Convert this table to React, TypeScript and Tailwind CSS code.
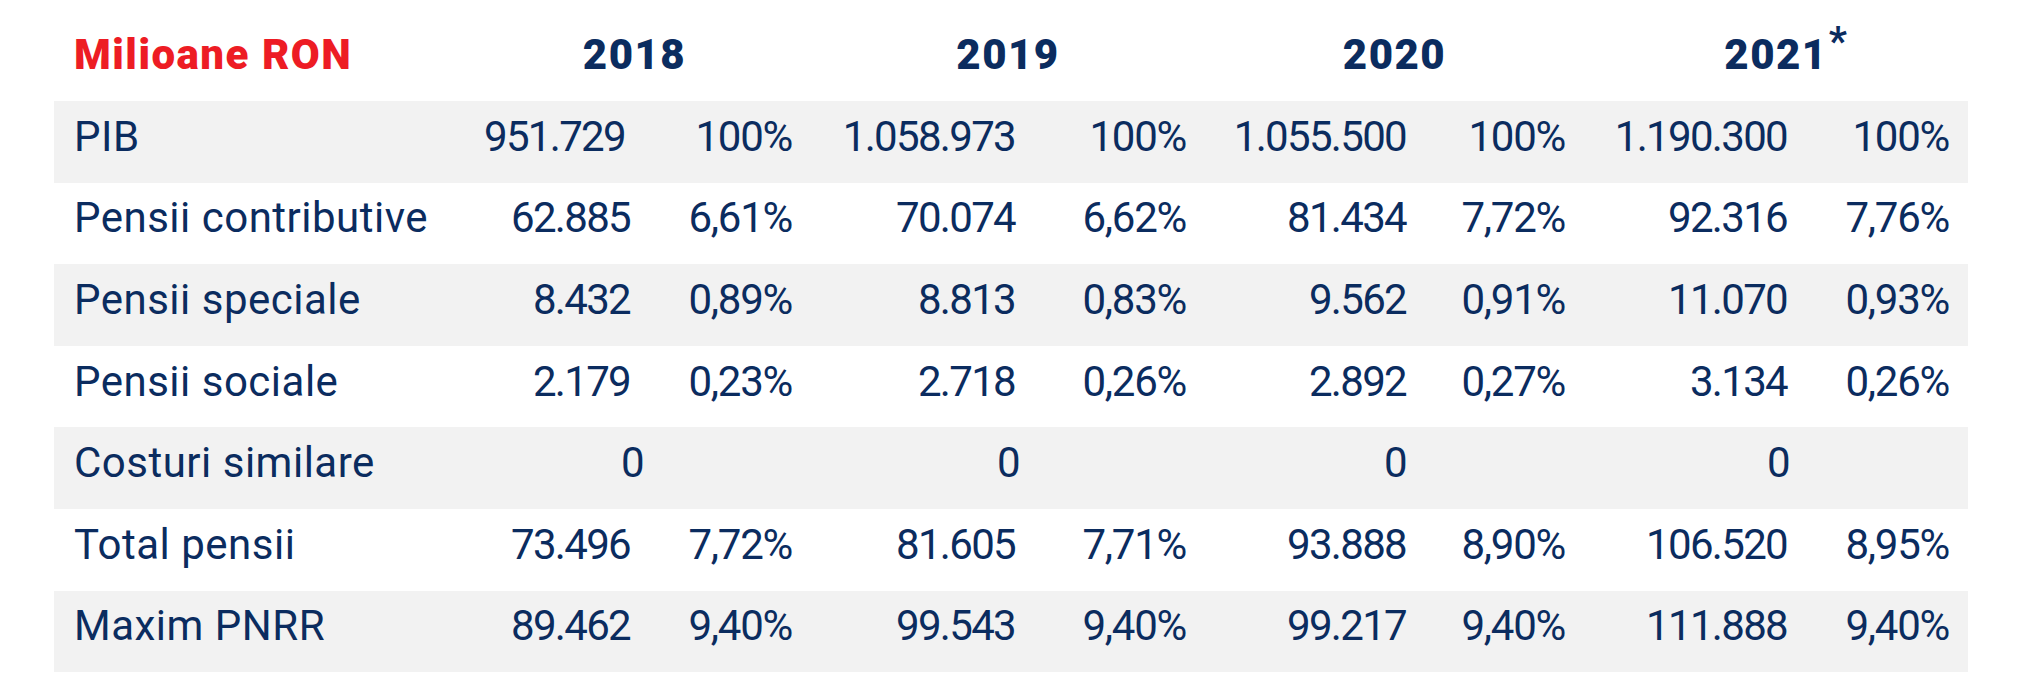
import React from "react";

type Row = { label: string; cells: [string, string][]; gray: boolean; adj?: Record<number, string> };

const rows: Row[] = [
  { label: "PIB", gray: true, cells: [["951.729", "100%"], ["1.058.973", "100%"], ["1.055.500", "100%"], ["1.190.300", "100%"]], adj: { 0: "pr-[30px]" } },
  { label: "Pensii contributive", gray: false, cells: [["62.885", "6,61%"], ["70.074", "6,62%"], ["81.434", "7,72%"], ["92.316", "7,76%"]] },
  { label: "Pensii speciale", gray: true, cells: [["8.432", "0,89%"], ["8.813", "0,83%"], ["9.562", "0,91%"], ["11.070", "0,93%"]] },
  { label: "Pensii sociale", gray: false, cells: [["2.179", "0,23%"], ["2.718", "0,26%"], ["2.892", "0,27%"], ["3.134", "0,26%"]] },
  { label: "Costuri similare", gray: true, cells: [["0", ""], ["0", ""], ["0", ""], ["0", ""]], adj: { 0: "pr-[6px]", 1: "pr-[15px]", 3: "pr-[17px]" } },
  { label: "Total pensii", gray: false, cells: [["73.496", "7,72%"], ["81.605", "7,71%"], ["93.888", "8,90%"], ["106.520", "8,95%"]] },
  { label: "Maxim PNRR", gray: true, cells: [["89.462", "9,40%"], ["99.543", "9,40%"], ["99.217", "9,40%"], ["111.888", "9,40%"]] },
];

const grid = "grid grid-cols-[430px_165px_162px_223px_171px_220px_159px_222px_162px]";

export default function App() {
  return (
    <div
      className="w-[2028px] h-[692px] bg-white text-[#0b2c5f]"
      style={{ fontFamily: "Roboto, 'Liberation Sans', sans-serif" }}
    >
      <div className="ml-[54px] w-[1914px]">
        <div className={`${grid} h-[101px] items-center pt-[8px] text-[42px] font-black leading-none tracking-[1.5px]`}>
          <div className="pl-[20px] text-[#ed1c24] whitespace-nowrap">Milioane RON</div>
          <div className="col-span-2 text-center pr-[26px]">2018</div>
          <div className="col-span-2 text-center">2019</div>
          <div className="col-span-2 text-center">2020</div>
          <div className="col-span-2 text-center">
            <span className="relative">
              2021
              <span className="absolute left-[100%] top-[-8px] ml-[1px] text-[40px] font-bold">*</span>
            </span>
          </div>
        </div>
        {rows.map((r) => (
          <div
            key={r.label}
            className={`${grid} h-[81.6px] items-center pb-[10px] text-[42px] leading-none ${r.gray ? "bg-[#f2f2f2]" : "bg-white"}`}
          >
            <div className="pl-[20px] whitespace-nowrap tracking-[0.5px]">{r.label}</div>
            {r.cells.map(([n, p], i) => (
              <React.Fragment key={i}>
                <div className={`text-right whitespace-nowrap tracking-[-0.04em] ${r.adj && r.adj[i] ? r.adj[i] : "pr-[19px]"}`}>{n}</div>
                <div className="text-right whitespace-nowrap tracking-[-0.03em] pr-[19px]">{p}</div>
              </React.Fragment>
            ))}
          </div>
        ))}
      </div>
    </div>
  );
}
